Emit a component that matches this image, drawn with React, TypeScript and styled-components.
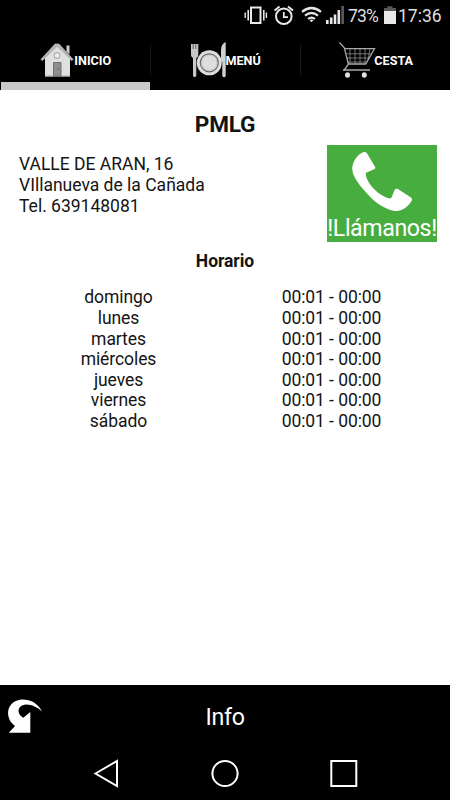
import React from "react";
import styled, { createGlobalStyle } from "styled-components";

const GlobalStyle = createGlobalStyle`
  * { box-sizing: border-box; }
  body { margin: 0; background: #fff; font-family: Roboto, "Liberation Sans", sans-serif; }
  svg { display: block; flex: none; }
`;

const Screen = styled.div`
  width: 450px;
  height: 800px;
  display: flex;
  flex-direction: column;
  overflow: hidden;
  background: #fff;
  color: #141414;
`;

const StatusBar = styled.header`
  height: 34px;
  flex: none;
  display: flex;
  align-items: flex-start;
  padding: 5px 0 0 243px;
  background: #000;
  color: #dedede;
`;

const StatusIcon = styled.svg<{ $gap: number }>`
  margin-right: ${(p) => p.$gap}px;
`;

const StatusText = styled.span<{ $width: number; $tracking?: number }>`
  width: ${(p) => p.$width}px;
  flex: none;
  font-size: 17.5px;
  letter-spacing: ${(p) => p.$tracking ?? 0}px;
  line-height: 22px;
  white-space: nowrap;
`;

const Tabs = styled.nav`
  height: 56px;
  flex: none;
  display: grid;
  grid-template-columns: repeat(3, 150px);
  background: #000;
`;

const Tab = styled.button<{ $active?: boolean; $divided?: boolean }>`
  display: flex;
  align-items: flex-start;
  height: 56px;
  margin: 0;
  padding: 8px 0 0 38px;
  border: 0;
  font: 700 12.6px/38px Roboto, sans-serif;
  color: #fff;
  text-align: left;
  white-space: nowrap;
  background:
    ${(p) => (p.$active ? "linear-gradient(#c9c9c9, #c9c9c9) 1px 48px / 150px 8px no-repeat," : "")}
    ${(p) => (p.$divided ? "linear-gradient(#191919, #191919) 0 11px / 1px 30px no-repeat," : "")}
    #000;
`;

const TabLabel = styled.span<{ $nudge?: number }>`
  margin-left: ${(p) => p.$nudge ?? 0}px;
`;

const Content = styled.main`
  height: 595px;
  flex: none;
  padding-top: 20px;
`;

const Title = styled.h1`
  margin: 0;
  font-size: 22.6px;
  letter-spacing: -0.2px;
  line-height: 30px;
  font-weight: 700;
  text-align: center;
`;

const Contact = styled.section`
  display: flex;
  justify-content: space-between;
  padding: 5px 13px 0 19px;
`;

const Address = styled.address`
  padding-top: 9.4px;
  font-style: normal;
  font-size: 17.5px;
  line-height: 20.67px;
  white-space: nowrap;
`;

const CallButton = styled.button`
  width: 110px;
  height: 97px;
  padding: 6px 0 0;
  border: 0;
  display: flex;
  flex-direction: column;
  align-items: center;
  background: #48ad3f;
  color: #fff;
  font: 400 23.2px/30px Roboto, sans-serif;
  letter-spacing: -0.42px;
  white-space: nowrap;
`;

const CallLabel = styled.span`
  margin-top: 2px;
`;

const HoursTitle = styled.h2`
  margin: 8px 0 0;
  font-size: 17.5px;
  letter-spacing: -0.05px;
  line-height: 22px;
  font-weight: 700;
  text-align: center;
`;

const Hours = styled.dl`
  margin: 15.2px 0 0 12px;
  display: grid;
  grid-template-columns: 213px 213px;
  grid-auto-rows: 20.67px;
  text-align: center;
  font-size: 17.5px;
  letter-spacing: -0.08px;
  line-height: 20.67px;
`;

const Day = styled.dt``;

const Time = styled.dd`
  margin: 0;
`;

const BottomBar = styled.footer`
  height: 64px;
  flex: none;
  display: grid;
  grid-template-columns: 50px 1fr 50px;
  padding-top: 13px;
  background: #000;
  color: #fff;
`;

const BarTitle = styled.span`
  font-size: 23.2px;
  letter-spacing: -0.3px;
  line-height: 38px;
  text-align: center;
`;

const SystemNav = styled.nav`
  height: 51px;
  flex: none;
  display: flex;
  padding: 9px 0 0 91px;
  gap: 89px;
  background: #000;
`;

const days = ["domingo", "lunes", "martes", "miércoles", "jueves", "viernes", "sábado"];

const HouseIcon = () => (
  <svg width="37" height="38" viewBox="0 0 37 38">
    <path d="M28.5 3.5h3v9l-3-3z" fill="#ccc" />
    <path d="M7 16L19 4l13 12v18.5H7z" fill="#e0e0e0" />
    <path d="M2.8 17.5L17 2h4l14.2 15.5-1.7 1L19 4.8 4.5 18.5z" fill="#b5b5b5" stroke="#ccc" strokeWidth=".6" />
    <circle cx="19" cy="13.5" r="2.8" fill="#eee" stroke="#b0b0b0" strokeWidth="1.2" />
    <path d="M15.5 20.5h7.5V34h-7.5z" fill="#8e8e8e" stroke="#707070" strokeWidth="1" />
    <path d="M20.5 26v2" stroke="#666" />
    <path d="M7 34h8.5M23.5 34H32" stroke="#aaa" />
  </svg>
);

const PlateIcon = () => (
  <svg width="38" height="38" viewBox="0 0 38 38">
    <path d="M3 2v11q0 2 2 3v18q1.7 2.3 3.3 0V16q2-1 2-3V2" fill="#c8c8c8" />
    <path d="M5.2 2v5M7.8 2v5" stroke="#444" strokeWidth=".8" />
    <path d="M34.3 34V20l-1.3-1V8q0-6 4.7-8v34q-1.6 2.5-3.4 0z" fill="#d2d2d2" />
    <circle cx="21.3" cy="20.8" r="12.5" fill="#dedede" />
    <circle cx="21.3" cy="20.8" r="9" fill="none" stroke="#666" strokeWidth="1.2" />
    <circle cx="21.3" cy="20.8" r="7.5" fill="none" stroke="#c0c0c0" strokeWidth=".7" />
  </svg>
);

const CartIcon = () => (
  <svg width="38" height="38" viewBox="0 0 38 38" fill="none">
    <path d="M8.5 11.8h25M8.5 16h22.5M9 20h20M12 7v15M17 7v15M22 7v15M27 7v15M32 7l-2 11" stroke="#8e8e8e" strokeWidth=".8" />
    <path d="M1.5.5l4.8 5.2 4.2 16.8M6.5 6.7h30l-8.8 15.3H10.5L6 28.3" stroke="#aaa" strokeWidth="1.3" />
    <path d="M5 28h27" stroke="#c5c5c5" strokeWidth="1.3" />
    <ellipse cx="9.5" cy="33" rx="2.5" ry="2.8" fill="#e0e0e0" />
    <ellipse cx="26.3" cy="33" rx="2.5" ry="2.8" fill="#e0e0e0" />
  </svg>
);

const PhoneIcon = () => (
  <svg width="62" height="60" viewBox="0 0 62 60">
    <path
      d="M1.5 14.5C3 7 9 1.5 13 .6q2-.4 3.1 1.4l8 13.5q.8 1.7-1 2.3l-8.5 3.8C15 32 28 45 39 47q1.2 0 1.8-1.4l2.8-7q1-2.1 3.3-1.2l13 8.5q2 1.4.6 3.7c-2.7 5-8.5 9.4-14.8 10-9 .1-21.4-7.8-29.7-17.5C7.7 32.5-.2 23.5 1.5 14.5z"
      fill="#fff"
      transform="translate(0 .5)"
    />
  </svg>
);

export default function App() {
  return (
    <>
      <GlobalStyle />
      <Screen>
        <StatusBar>
          <StatusIcon $gap={6} width="25" height="21" viewBox="0 0 25 21" fill="none" stroke="#e8e8e8">
            <rect x="8" y="2.5" width="9.5" height="15.5" strokeWidth="2" />
            <path d="M5.2 5v10.5M20.8 5v10.5" strokeWidth="1.6" />
            <path d="M2.2 7.5v5.5M23.4 7.5v5.5" strokeWidth="1.4" />
          </StatusIcon>
          <StatusIcon $gap={6} width="21" height="21" viewBox="0 0 21 21" fill="none" stroke="#e8e8e8">
            <circle cx="9.8" cy="11.2" r="7.8" strokeWidth="2" />
            <path d="M9.8 7v5.2h4.2" strokeWidth="1.7" />
            <path d="M.5 5.6l5-4.1M19 5.6l-5-4.1" strokeWidth="2" />
          </StatusIcon>
          <StatusIcon $gap={4} width="21" height="21" viewBox="0 0 21 21" fill="none" stroke="#e8e8e8">
            <path d="M1 6.8q9.5-7.6 19 0M4 10.6q6.5-5.2 13 0M7 14q3.5-2.8 7 0" strokeWidth="2.2" />
            <path d="M10.5 17.2l-2-2q2-1.5 4 0z" fill="#e8e8e8" stroke="none" />
          </StatusIcon>
          <StatusIcon $gap={3} width="19" height="21" viewBox="0 0 19 21">
            <path d="M0 15h2.6v4H0zM3.9 12.5h2.6V19H3.9zM7.7 9.5h2.6V19H7.7zM11.5 5h2.6v14h-2.6z" fill="#e8e8e8" />
            <path d="M15.3 1h2.7v18h-2.7z" fill="#575757" />
          </StatusIcon>
          <StatusText $width={36} $tracking={-0.8}>73%</StatusText>
          <StatusIcon $gap={2} width="12" height="21" viewBox="0 0 12 21">
            <path d="M0 3h3.3V1.2h5.2V3H12v3H0z" fill="#575757" />
            <path d="M0 6h12v13H0z" fill="#e8e8e8" />
          </StatusIcon>
          <StatusText $width={46}>17:36</StatusText>
        </StatusBar>
        <Tabs>
          <Tab $active>
            <HouseIcon />
            <TabLabel $nudge={-0.7}>INICIO</TabLabel>
          </Tab>
          <Tab $divided>
            <PlateIcon />
            <TabLabel $nudge={-0.5}>MENÚ</TabLabel>
          </Tab>
          <Tab $divided>
            <CartIcon />
            <TabLabel $nudge={-1.7}>CESTA</TabLabel>
          </Tab>
        </Tabs>
        <Content>
          <Title>PMLG</Title>
          <Contact>
            <Address>
              VALLE DE ARAN, 16
              <br />
              VIllanueva de la Cañada
              <br />
              Tel. 639148081
            </Address>
            <CallButton>
              <PhoneIcon />
              <CallLabel>!Llámanos!</CallLabel>
            </CallButton>
          </Contact>
          <HoursTitle>Horario</HoursTitle>
          <Hours>
            {days.map((day) => (
              <React.Fragment key={day}>
                <Day>{day}</Day>
                <Time>00:01 - 00:00</Time>
              </React.Fragment>
            ))}
          </Hours>
        </Content>
        <BottomBar>
          <svg width="50" height="42" viewBox="0 0 50 42">
            <path
              d="M42 13.5C37 3.5 27 .3 19 1.9 9.5 4 7 12 8.5 18.5c.8 4.3 3.5 7 6.5 9.5l-6.2 6.8h21.5V14l-7 5.8C18 17 16.5 10.5 22 7.5c6-2.5 14 .5 20 6z"
              fill="#fff"
            />
          </svg>
          <BarTitle>Info</BarTitle>
        </BottomBar>
        <SystemNav>
          <svg width="30" height="32" viewBox="0 0 30 32" fill="none" stroke="#fff" strokeWidth="2">
            <path d="M4.5 15.5L26 3v25z" />
          </svg>
          <svg width="30" height="32" viewBox="0 0 30 32" fill="none" stroke="#fff" strokeWidth="2">
            <circle cx="15" cy="15.5" r="12.6" />
          </svg>
          <svg width="30" height="32" viewBox="0 0 30 32" fill="none" stroke="#fff" strokeWidth="2">
            <rect x="2.3" y="3" width="25" height="25" />
          </svg>
        </SystemNav>
      </Screen>
    </>
  );
}
